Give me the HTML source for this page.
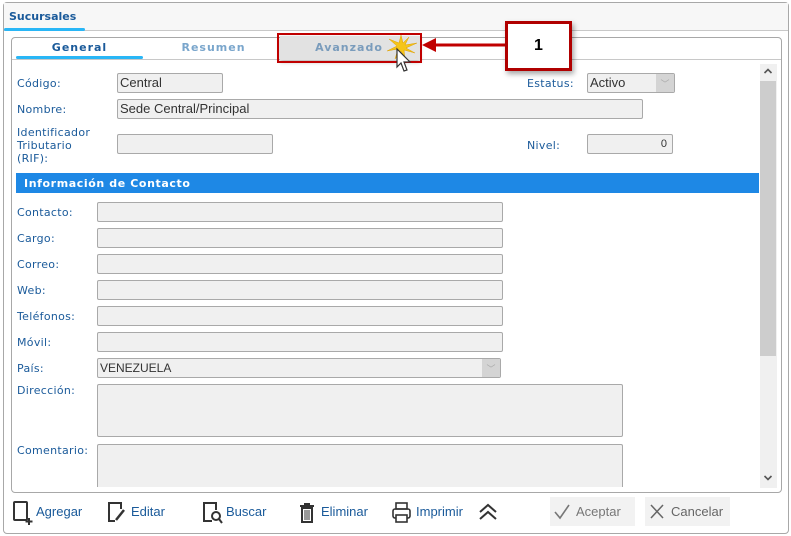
<!DOCTYPE html>
<html><head><meta charset="utf-8"><style>
*{box-sizing:border-box;margin:0;padding:0}
body{width:791px;height:536px;background:#fff;position:relative;overflow:hidden;font-family:"DejaVu Sans","Liberation Sans",sans-serif;}
.a{position:absolute}
.outer{left:3px;top:2px;width:786px;height:532px;border:1px solid #a8a8a8;border-radius:4px;background:#fff}
.hdr{left:4px;top:3px;width:784px;height:28px;background:#f7f7f7;border-bottom:1px solid #c8c8c8}
.lbl{font-size:11px;color:#1a5a9a;letter-spacing:0.3px}
.inp{background:#f0f0f0;border:1px solid #a9a9a9;border-radius:2px;height:20px;font-size:13px;color:#333;padding:1px 0 0 2px;font-family:"Liberation Sans",sans-serif}
.tab{font-size:11px;font-weight:bold;letter-spacing:1px;text-align:center}
.tb{font-family:"Liberation Sans",sans-serif;font-size:13px;color:#1a5a9a}
</style></head><body>
<div class="a outer"></div>
<div class="a hdr"></div>
<div class="a" style="left:9px;top:10px;font-size:11px;font-weight:bold;color:#1a5a9a">Sucursales</div>
<div class="a" style="left:4px;top:28px;width:81px;height:3px;background:#29b6f6;border-radius:2px"></div>

<div class="a" style="left:11px;top:37px;width:771px;height:456px;border:1px solid #a8a8a8;border-radius:4px"></div>
<div class="a" style="left:12px;top:59px;width:769px;height:1px;background:#c8c8c8"></div>
<div class="a tab" style="left:16px;top:41px;width:127px;color:#1a5a9a">General</div>
<div class="a" style="left:16px;top:56px;width:127px;height:3px;background:#29b6f6;border-radius:2px"></div>
<div class="a tab" style="left:150px;top:41px;width:127px;color:#7aa6cc">Resumen</div>
<div class="a" style="left:280px;top:36px;width:140px;height:24px;background:#e2e2e2;box-shadow:0 2px 4px rgba(0,0,0,.3)"></div>
<div class="a tab" style="left:283px;top:41px;width:132px;color:#7a9cbc">Avanzado</div>
<div class="a" style="left:277px;top:33px;width:145px;height:30px;border:2px solid #c00000"></div>
<svg class="a" style="left:383px;top:33px" width="40" height="44" viewBox="0 0 40 44">
<polygon points="18,2 20,10 26,4 22,12 34,10 23,15 32,20 21,17 22,26 18,18 12,26 15,16 4,18 14,13 6,6 16,10" fill="#f5c518" stroke="#e0a000" stroke-width="0.5"/>
<path d="M14,16 L14,34 L18,30 L21,38 L24,37 L21,29 L27,29 Z" fill="#fff" stroke="#333" stroke-width="1.2"/>
</svg>
<svg class="a" style="left:420px;top:37px" width="90" height="16"><line x1="12" y1="8" x2="88" y2="8" stroke="#c00000" stroke-width="3"/><polygon points="2,8 16,1 16,15" fill="#c00000"/></svg>
<div class="a" style="left:505px;top:21px;width:67px;height:50px;border:3px solid #b00000;background:#fff;box-shadow:2px 3px 5px rgba(0,0,0,.35);font-family:'Liberation Sans',sans-serif;font-weight:bold;font-size:16px;text-align:center;padding-top:13px">1</div>

<div class="a lbl" style="left:17px;top:77px">Código:</div>
<div class="a inp" style="left:117px;top:73px;width:106px">Central</div>
<div class="a lbl" style="left:527px;top:77px">Estatus:</div>
<div class="a inp" style="left:587px;top:73px;width:88px">Activo</div>
<div class="a" style="left:656px;top:74px;width:18px;height:18px;background:#d4d4d4;color:#aaa;font-size:9px;text-align:center;padding-top:3px">﹀</div>
<div class="a lbl" style="left:17px;top:103px">Nombre:</div>
<div class="a inp" style="left:117px;top:99px;width:526px">Sede Central/Principal</div>
<div class="a lbl" style="left:17px;top:126px;line-height:13px">Identificador<br>Tributario<br>(RIF):</div>
<div class="a inp" style="left:117px;top:134px;width:156px"></div>
<div class="a lbl" style="left:527px;top:139px">Nivel:</div>
<div class="a inp" style="left:587px;top:134px;width:86px;text-align:right;padding:3px 5px 0 0;font-size:11px">0</div>

<div class="a" style="left:16px;top:173px;width:743px;height:20px;background:#1e88e5;color:#fff;font-size:11px;font-weight:bold;letter-spacing:0.6px;padding:4px 0 0 8px">Información de Contacto</div>

<div class="a lbl" style="left:17px;top:206px">Contacto:</div><div class="a inp" style="left:97px;top:202px;width:406px"></div>
<div class="a lbl" style="left:17px;top:232px">Cargo:</div><div class="a inp" style="left:97px;top:228px;width:406px"></div>
<div class="a lbl" style="left:17px;top:258px">Correo:</div><div class="a inp" style="left:97px;top:254px;width:406px"></div>
<div class="a lbl" style="left:17px;top:284px">Web:</div><div class="a inp" style="left:97px;top:280px;width:406px"></div>
<div class="a lbl" style="left:17px;top:310px">Teléfonos:</div><div class="a inp" style="left:97px;top:306px;width:406px"></div>
<div class="a lbl" style="left:17px;top:336px">Móvil:</div><div class="a inp" style="left:97px;top:332px;width:406px"></div>
<div class="a lbl" style="left:17px;top:362px">País:</div><div class="a inp" style="left:97px;top:358px;width:404px;font-size:12px;padding-top:2px">VENEZUELA</div>
<div class="a" style="left:482px;top:359px;width:18px;height:18px;background:#d4d4d4;color:#aaa;font-size:9px;text-align:center;padding-top:3px">﹀</div>
<div class="a lbl" style="left:17px;top:384px">Dirección:</div><div class="a inp" style="left:97px;top:384px;width:526px;height:53px"></div>
<div class="a lbl" style="left:17px;top:444px">Comentario:</div><div class="a inp" style="left:97px;top:444px;width:526px;height:44px;border-bottom:none;border-radius:2px 2px 0 0"></div>
<div class="a" style="left:97px;top:487px;width:660px;height:5px;background:#fff"></div>

<div class="a" style="left:760px;top:64px;width:17px;height:424px;background:#f0f0f0"></div>
<div class="a" style="left:760px;top:81px;width:16px;height:275px;background:#cdcdcd"></div>
<svg class="a" style="left:763px;top:67px" width="10" height="8"><path d="M1.5 6L5 2.5 8.5 6" fill="none" stroke="#555" stroke-width="1.6"/></svg>
<svg class="a" style="left:763px;top:474px" width="10" height="8"><path d="M1.5 2L5 5.5 8.5 2" fill="none" stroke="#555" stroke-width="1.6"/></svg>

<svg class="a" style="left:12px;top:501px" width="22" height="24"><rect x="2" y="1" width="13" height="18" rx="1" fill="none" stroke="#333" stroke-width="2"/><path d="M17 17v7M13.5 20.5h7" stroke="#333" stroke-width="2"/></svg>
<div class="a tb" style="left:36px;top:504px">Agregar</div>
<svg class="a" style="left:106px;top:501px" width="22" height="24"><path d="M15 8V2H3v18h6" fill="none" stroke="#333" stroke-width="2"/><path d="M18 9l-8 10" stroke="#333" stroke-width="2.5"/></svg>
<div class="a tb" style="left:131px;top:504px">Editar</div>
<svg class="a" style="left:201px;top:501px" width="22" height="24"><path d="M11 20H3V2h12v7" fill="none" stroke="#333" stroke-width="2"/><circle cx="15" cy="15" r="4" fill="none" stroke="#333" stroke-width="2"/><path d="M18 18l3 4" stroke="#333" stroke-width="2"/></svg>
<div class="a tb" style="left:226px;top:504px">Buscar</div>
<svg class="a" style="left:297px;top:501px" width="20" height="24"><path d="M3 5h14M8 5V3h4v2" fill="none" stroke="#333" stroke-width="2"/><rect x="5" y="7" width="10" height="14" fill="none" stroke="#333" stroke-width="2"/><path d="M8 9v10M10 9v10M12 9v10" stroke="#333"/></svg>
<div class="a tb" style="left:321px;top:504px">Eliminar</div>
<svg class="a" style="left:391px;top:501px" width="22" height="24"><rect x="5" y="2" width="11" height="6" fill="none" stroke="#333" stroke-width="1.6"/><rect x="2" y="8" width="17" height="9" rx="2" fill="none" stroke="#333" stroke-width="1.6"/><rect x="5" y="14" width="11" height="7" fill="#fff" stroke="#333" stroke-width="1.6"/></svg>
<div class="a tb" style="left:416px;top:504px">Imprimir</div>
<svg class="a" style="left:478px;top:503px" width="20" height="18"><path d="M2 9l8-7 8 7M2 16l8-7 8 7" fill="none" stroke="#333" stroke-width="2"/></svg>

<div class="a" style="left:550px;top:497px;width:85px;height:29px;background:#f2f2f2"></div>
<svg class="a" style="left:553px;top:503px" width="18" height="17"><path d="M2 9l5 6L16 2" fill="none" stroke="#777" stroke-width="1.6"/></svg>
<div class="a tb" style="left:576px;top:504px;color:#777">Aceptar</div>
<div class="a" style="left:645px;top:497px;width:85px;height:29px;background:#f2f2f2"></div>
<svg class="a" style="left:649px;top:503px" width="16" height="17"><path d="M2 2l12 13M14 2L2 15" stroke="#666" stroke-width="1.5"/></svg>
<div class="a tb" style="left:671px;top:504px;color:#666">Cancelar</div>
</body></html>
